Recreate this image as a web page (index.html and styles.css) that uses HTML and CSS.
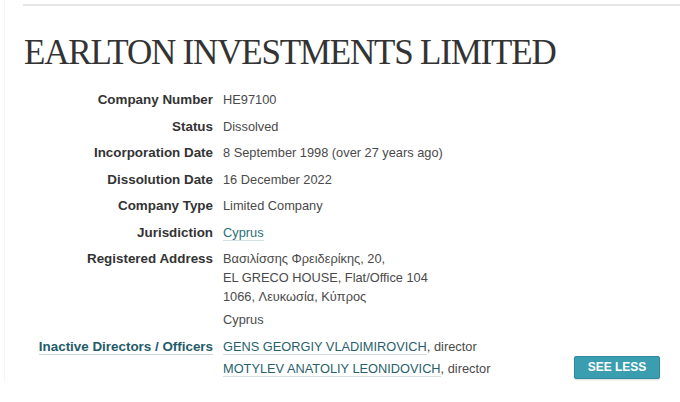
FILE: index.html
```html
<!DOCTYPE html>
<html lang="en">
<head>
<meta charset="utf-8">
<title>EARLTON INVESTMENTS LIMITED</title>
<link rel="stylesheet" href="styles.css">
</head>
<body>
<div class="page">
  <div class="rule"></div>
  <h1 class="title">EARLTON INVESTMENTS LIMITED</h1>
  <dl class="facts">
    <dt>Company Number</dt>
    <dd>HE97100</dd>
    <dt>Status</dt>
    <dd>Dissolved</dd>
    <dt>Incorporation Date</dt>
    <dd>8 September 1998 (over 27 years ago)</dd>
    <dt>Dissolution Date</dt>
    <dd>16 December 2022</dd>
    <dt>Company Type</dt>
    <dd>Limited Company</dd>
    <dt>Jurisdiction</dt>
    <dd><a class="link" href="#">Cyprus</a></dd>
    <dt>Registered Address</dt>
    <dd>
      <div class="addr">Βασιλίσσης Φρειδερίκης, 20,<br>EL GRECO HOUSE, Flat/Office 104<br>1066, Λευκωσία, Κύπρος</div>
      <div class="country">Cyprus</div>
    </dd>
    <dt><a class="label-link" href="#">Inactive Directors / Officers</a></dt>
    <dd class="officers">
      <ul class="officer-list">
        <li><a class="officer" href="#">GENS GEORGIY VLADIMIROVICH</a>, director</li>
        <li><a class="officer" href="#">MOTYLEV ANATOLIY LEONIDOVICH</a>, director</li>
      </ul>
      <button class="see-less" type="button">SEE LESS</button>
    </dd>
  </dl>
</div>
</body>
</html>
```
FILE: styles.css
```css
html, body {
  margin: 0;
  padding: 0;
  background: #ffffff;
}
body {
  font-family: "Liberation Sans", Arial, Helvetica, sans-serif;
  color: #444;
  font-size: 13px;
}
.page {
  padding: 4px 20px 0 18px;
  border-left: 1px solid #f5f5f5;
  margin-left: 4px;
}
.rule {
  height: 2px;
  background: #e6e6e6;
  margin-right: -20px;
}
.title {
  font-family: "Liberation Serif", "Times New Roman", serif;
  font-weight: normal;
  font-size: 35px;
  line-height: 40px;
  color: #333;
  margin: 27px 0 17px 1px;
  letter-spacing: -1.2px;
  white-space: nowrap;
}
.facts {
  display: grid;
  grid-template-columns: 190px 1fr;
  column-gap: 10px;
  row-gap: 7.5px;
  margin: 0;
  line-height: 19px;
}
.facts dt {
  text-align: right;
  font-weight: bold;
  color: #333;
  font-size: 13.4px;
}
.facts dd {
  margin: 0;
  color: #4a4a4a;
  font-size: 12.8px;
}
.link {
  color: #2b6f7d;
  text-decoration: none;
  border-bottom: 1px solid #d3e0e4;
}
.addr {
  line-height: 19px;
}
.country {
  margin-top: 4px;
}
.label-link {
  color: #1f5c69;
  text-decoration: none;
  border-bottom: 1px solid #c9d7db;
}
.officers {
  display: flex;
  justify-content: space-between;
  align-items: flex-end;
}
.officer-list {
  list-style: none;
  margin: 0;
  padding: 0;
}
.officer-list li {
  line-height: 19px;
  margin-bottom: 3px;
}
.officer {
  color: #285f6d;
  text-decoration: none;
  border-bottom: 1px solid #d5dfe2;
}
.see-less {
  font-family: "Liberation Sans", Arial, sans-serif;
  font-weight: bold;
  font-size: 12px;
  color: #fff;
  background: #3a9db0;
  border: 1px solid #2f8a9c;
  border-radius: 2px;
  width: 86px;
  height: 23px;
  padding: 0;
  margin-bottom: 2px;
  box-shadow: 0 1px 2px rgba(0,0,0,0.15);
}
```
